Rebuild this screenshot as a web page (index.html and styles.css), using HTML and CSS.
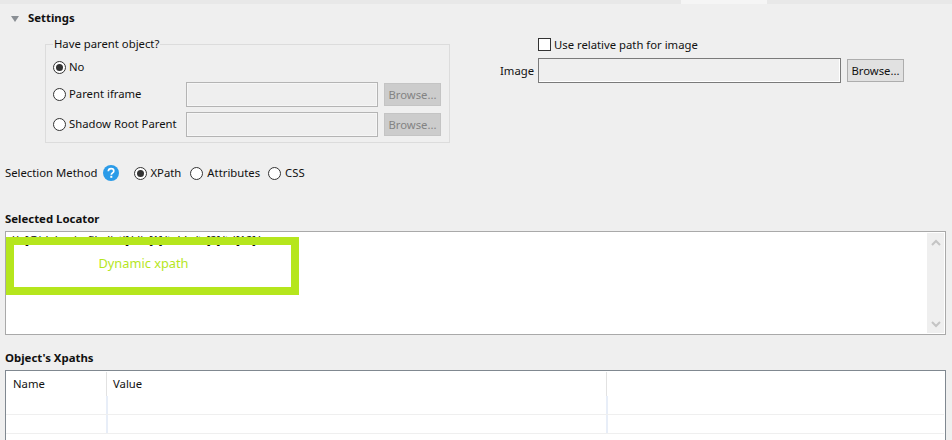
FILE: index.html
```html
<!DOCTYPE html>
<html lang="en">
<head>
<meta charset="utf-8">
<title>Settings</title>
<link rel="stylesheet" href="styles.css">
</head>
<body>
<div class="topbar"><div class="toptab"></div></div>
<main class="page">
  <header class="section-head">
    <svg class="twisty" width="8" height="6" viewBox="0 0 8 6"><path d="M0 0h8L4 6z" fill="#8a8f94"/></svg>
    <span class="bold">Settings</span>
  </header>
  <section class="settings">
    <fieldset class="group">
      <legend>Have parent object?</legend>
      <div class="row-no"><label class="opt"><span class="radio on"></span>No</label></div>
      <div class="row-field">
        <label class="opt"><span class="radio"></span>Parent iframe</label>
        <div class="input dis"></div><div class="btn dis">Browse...</div>
      </div>
      <div class="row-field r2">
        <label class="opt"><span class="radio"></span>Shadow Root Parent</label>
        <div class="input dis"></div><div class="btn dis">Browse...</div>
      </div>
    </fieldset>
    <div class="image-side">
      <label class="opt check-row"><span class="check"></span>Use relative path for image</label>
      <div class="image-row">
        <span class="image-label">Image</span>
        <div class="input wide"></div><div class="btn">Browse...</div>
      </div>
    </div>
  </section>
  <div class="method">
    <span>Selection Method</span>
    <svg class="help" width="16" height="16" viewBox="0 0 16 16"><circle cx="8" cy="8" r="8" fill="#2b9be8"/><path d="M5.3 6.2C5.4 4.6 6.5 3.6 8.1 3.6c1.600 0 2.700 1 2.700 2.300 0 2-2.500 2-2.500 3.900" fill="none" stroke="#fff" stroke-width="1.700"/><rect x="7.300" y="10.800" width="2" height="2" fill="#fff"/></svg>
    <label class="opt m1"><span class="radio on"></span>XPath</label>
    <label class="opt m2"><span class="radio"></span>Attributes</label>
    <label class="opt m3"><span class="radio"></span>CSS</label>
  </div>
  <h2 class="bold title-loc">Selected Locator</h2>
  <div class="locator">
    <div class="locator-text">//a[@id='main-file-list']/div[1]/table/tr[2]/td[12]/a</div>
    <div class="scroll">
      <svg width="10" height="7" viewBox="0 0 10 7"><path d="M1 6l4-4 4 4" fill="none" stroke="#c4c4c4" stroke-width="2"/></svg>
      <svg width="10" height="7" viewBox="0 0 10 7"><path d="M1 1l4 4 4-4" fill="none" stroke="#c4c4c4" stroke-width="2"/></svg>
    </div>
    <div class="mask">Dynamic xpath</div>
  </div>
  <h2 class="bold title-xp">Object's Xpaths</h2>
  <div class="table">
    <div class="thead">
      <div class="th c1">Name</div><div class="th c2">Value</div><div class="th c3"></div>
    </div>
    <div class="tr"><div class="td c1"></div><div class="td c2"></div></div>
    <div class="tr"><div class="td c1"></div><div class="td c2"></div></div>
  </div>
</main>
</body>
</html>
```
FILE: styles.css
```css
* { box-sizing: border-box; }
html, body { margin: 0; height: 440px; overflow: hidden; }
body { background: #efefef; color: #111; font: 11.3px/16px "Noto Sans", "Open Sans", sans-serif; }
.topbar { height: 4px; background: #e8e8e8; padding-left: 681px; }
.toptab { width: 86px; height: 4px; background: #f5f5f5; }
.page { padding: 6px 6px 0 5px; }
.bold { font-weight: 700; font-size: 11.4px; line-height: 16px; margin: 0; }
.section-head { display: flex; align-items: center; height: 16px; padding-left: 6px; }
.twisty { margin-right: 9px; margin-top: 2px; }
.settings { display: flex; align-items: flex-start; height: 124px; padding-left: 40px; }
.group { width: 405px; height: 107px; margin: 10px 0 0; padding: 0 7px; border: 1px solid #dcdcdc; position: relative; }
.group legend { padding: 0 1px; margin-left: 0; line-height: 16px; }
.opt { display: flex; align-items: center; white-space: nowrap; }
.radio { width: 13px; height: 13px; border: 1px solid #333; border-radius: 50%; background: #fff; margin-right: 3px; flex: none; display: flex; align-items: center; justify-content: center; }
.radio.on::after { content: ""; width: 7px; height: 7px; border-radius: 50%; background: #333; }
.check { width: 13px; height: 13px; border: 1px solid #333; background: #fff; margin-right: 3px; flex: none; }
.row-no { height: 16px; margin-top: 7px; }
.row-field { display: flex; align-items: center; margin-top: 7px; height: 25px; }
.row-field.r2 { margin-top: 5px; }
.row-field .opt { width: 133px; margin-top: -1px; }
.input { width: 192px; height: 25px; border: 1px solid #7a7a7a; background: #efefef; box-shadow: inset -1px -1px 0 #fff; }
.input.dis { border-color: #b4b4b4; box-shadow: inset 0 0 0 1px #f6f6f6; }
.input.wide { width: 303px; }
.btn { width: 57px; height: 23px; margin-left: 6px; background: #e1e1e1; border: 1px solid #adadad; text-align: center; line-height: 21px; }
.btn.dis { background: #cccccc; border-color: #c4c4c4; color: #838383; }
.image-side { margin-left: 50px; display: flex; flex-direction: column; width: 405px; padding-top: 12px; }
.check-row { margin-left: 38px; height: 13px; margin-top: 0; }
.image-row { display: flex; align-items: center; margin-top: 7px; height: 25px; }
.image-label { width: 38px; }
.method { display: flex; align-items: center; height: 16px; margin-top: 15px; }
.method .radio { margin-right: 4px; }
.help { margin-left: 5px; }
.m1 { margin-left: 15px; }
.m2 { margin-left: 9px; }
.m3 { margin-left: 8px; }
.title-loc { margin-top: 30px; }
.locator { position: relative; height: 104px; margin-top: 4px; border: 1px solid #a9a9a9; background: #fff; display: flex; overflow: hidden; }
.locator-text { flex: 1; padding: 0 0 0 4px; line-height: 16px; white-space: nowrap; }
.scroll { width: 17px; margin: 1px; background: #efefef; display: flex; flex-direction: column; justify-content: space-between; align-items: center; padding: 6px 0 5px; }
.mask { position: absolute; left: 0; top: 5px; width: 293px; height: 58px; border: 8px solid #b5e61d; color: #b5e61d; font-size: 12.8px; text-align: center; line-height: 36px; padding-right: 18px; background: linear-gradient(#fff, #fff) 0 3px / 100% 100% no-repeat; background-clip: padding-box; }
.title-xp { margin-top: 15px; }
.table { margin-top: 4px; height: 80px; border: 1px solid #808890; background: #fff; padding: 1px 1px 0 0; }
.thead { display: flex; height: 24px; }
.th { height: 24px; padding: 4px 0 0 7px; border-right: 1px solid #e2e2e2; }
.th.c2 { padding-left: 6px; }
.c1 { width: 101px; }
.c2 { width: 500px; }
.c3 { flex: 1; border-right: 0; }
.tr { display: flex; height: 19px; border-bottom: 1px solid #efefef; margin-top: 0; }
.tr .td.c1 { border-right: 2px solid #e8eef8; width: 102px; }
.tr .td.c2 { border-right: 2px solid #e8eef8; width: 500px; }
```
